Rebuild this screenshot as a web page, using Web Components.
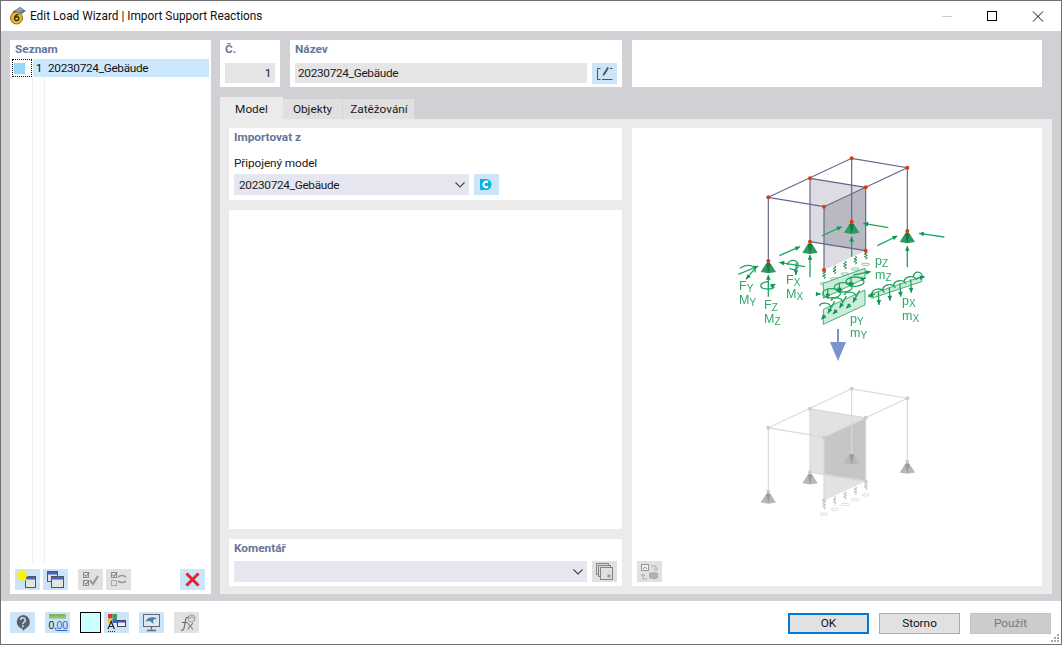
<!DOCTYPE html>
<html lang="cs"><head><meta charset="utf-8"><title>Edit Load Wizard</title>
<style>html,body{margin:0;padding:0;background:#fff}</style></head><body>
<load-wizard></load-wizard>
<script>
const FONT='Roboto,"Noto Sans",sans-serif';
const WIN=(x,y,w,h)=>`<rect x="${x+.5}" y="${y+.5}" width="${w}" height="${h}" fill="#e4e4e4" stroke="#555"/><rect x="${x+1}" y="${y+1}" width="${w-1}" height="2.5" fill="#3f62c8"/>`;
const ICONS={
 star:`<path d="M7.500 0l1.300 3.600L12.500 1.700 10.800 5.400 14.500 6.500 10.800 8.300 12 12 8.300 10.200 6.500 13.500 5.200 9.800 1.500 11 3.200 7.500 0 6 3.800 4.800 2.500 1.500 6 3.200z" fill="#fff200"/>`,
 new:()=>WIN(10,7,10,11)+ICONS.star,
 copy:()=>WIN(4,2,10,10)+WIN(8,7,12,11),
 checkall:()=>`<g fill="none" stroke="#8c8c8c"><rect x="5.500" y="3.500" width="5" height="5"/><rect x="5.500" y="11.500" width="5" height="5"/></g><path d="M6.500 5.500l1.500 2 3-4M6.500 13.500l1.500 2 3-4" fill="none" stroke="#777"/><path d="M12 11.500l3 3.500 5-8" fill="none" stroke="#999" stroke-width="2.200"/>`,
 checktoggle:()=>`<g fill="none" stroke="#8c8c8c"><rect x="5.500" y="3.500" width="5" height="5"/><rect x="5.500" y="11.500" width="5" height="5" stroke="#aaa"/></g><path d="M6.500 5.500l1.500 2 3-4" fill="none" stroke="#777"/><path d="M12 8q4-3 8 0M20 12q-4 3-8 0" fill="none" stroke="#999" stroke-width="1.600"/>`,
 del:()=>`<path d="M7.500 5.500l10 10M17.500 5.500l-10 10" stroke="#ea2127" stroke-width="3" stroke-linecap="square"/>`,
 help:()=>`<path d="M13 3a7 7 0 0 1 3 13.200L12.500 19l.3-2.100A7 7 0 0 1 13 3z" fill="#5b5f66"/><path d="M10.500 8a2.400 2.400 0 1 1 3.600 2.200c-1 .6-1.200 1-1.200 2" fill="none" stroke="#cfe4f7" stroke-width="1.500"/><rect x="12" y="13.400" width="1.700" height="1.700" fill="#cfe4f7"/>`,
 num:()=>`<rect x="4" y="2" width="17" height="4.500" fill="#8fc06a"/><path d="M6 2v2M9 2v2M12 2v2M15 2v2M18 2v2" stroke="#5c8f40" stroke-width=".7"/><text x="3.500" y="17" font-family="Liberation Sans,sans-serif" font-size="10.500" fill="#222">0,</text><text x="11.400" y="17" font-family="Liberation Sans,sans-serif" font-size="10.500" fill="#2c66d0">00</text><path d="M11.500 18.500h11" stroke="#2c66d0"/>`,
 color:()=>`<rect x="4" y="2" width="4.500" height="4.500" fill="#d33"/><rect x="8.500" y="2" width="4.500" height="4.500" fill="#3a3"/><rect x="4" y="6.500" width="4.500" height="4.500" fill="#e8c820"/><rect x="8.500" y="6.500" width="4.500" height="4.500" fill="#36c"/><path d="M4 17l3.200-7.500L10.400 17M5 14.500h4.600" fill="none" stroke="#222" stroke-width="1.200"/><path d="M4 19.500h8" stroke="#333" stroke-dasharray="1 1"/><rect x="13.500" y="8.500" width="8" height="6" fill="#eef" stroke="#445"/><rect x="14" y="9" width="7" height="1.600" fill="#3f62c8"/>`,
 view:()=>`<rect x="4.500" y="2.500" width="16" height="12" fill="#dfe7ee" stroke="#667"/><path d="M6.500 9.500c2-4.500 7-5.500 12-3-2.500 0-4 1-4.500 2.200l.5 3.300-3-2.500c-2-1-3-.5-5 0z" fill="#4f7f9f"/><path d="M12.500 14.500v3M8 18.500h9" stroke="#667" stroke-width="1.400"/>`,
 fx:()=>`<path d="M7 18c2.500 1 3-1 3.500-4l1-6c.5-2.500 1.500-3 3-2.500M8 10.500h5.500" fill="none" stroke="#666" stroke-width="1.100"/><path d="M13.500 11l5.500 6.500M19 11l-5.500 6.500" stroke="#777" stroke-width="1.100"/><circle cx="17.500" cy="6.500" r="3.500" fill="none" stroke="#999"/><path d="M14 6.500q3.500-3.500 7 0" fill="#bbb" stroke="#999" stroke-width=".6"/>`,
 edit:()=>`<path d="M8.500 5.500h-3v11h3M10 16.500h10.500" fill="none" stroke="#555"/><path d="M10.500 13.500l.8-3 4-6.500 1.700 1-4 6.500z" fill="#555"/><path d="M18 5.500h2.500" stroke="#555"/>`,
 conn:()=>`<path d="M6 5h6a5.500 5.500 0 0 1 0 11H6z" fill="#0ab3e6"/><path d="M14 8.500a2.700 2.700 0 1 0 0 4" fill="none" stroke="#fff" stroke-width="2"/>`,
 library:()=>`<g fill="#d9d9d9" stroke="#868686"><rect x="4.500" y="2.500" width="12" height="11"/><rect x="6.500" y="4.500" width="12" height="11"/><rect x="8.500" y="6.500" width="12" height="12" fill="#e0e0e0"/></g><rect x="15.500" y="13.500" width="3" height="3" fill="#999"/>`,
 swap:()=>`<rect x="4.500" y="3.500" width="7" height="6" fill="#eee" stroke="#999"/><path d="M6 8l2-2 2 2" fill="none" stroke="#999"/><path d="M14 5h5v4M17 7.500l2 2 2-2" fill="none" stroke="#aaa"/><path d="M10 18H6v-4M4 15l2-2 2 2" fill="none" stroke="#aaa"/><path d="M12 12l5-1 4 1v5l-4 1.500-5-1.500z" fill="#b0b0b0"/>`
};
function comp(name,css,render){
 customElements.define(name,class extends HTMLElement{
  connectedCallback(){
   if(this.shadowRoot)return;
   const s=this.attachShadow({mode:'open'});
   s.innerHTML=`<style>${css}</style>`+render(this);
  }
 });
}
comp('icon-btn',`:host{display:inline-block;width:25px;height:21px;background:#cbe4f8;flex:none}:host([off]){background:#e1e1e1}svg{display:block}`,
 e=>`<svg width="25" height="21" viewBox="0 0 25 21" aria-hidden="true">${ICONS[e.getAttribute('icon')]()}</svg>`);
comp('text-field',`:host{display:block;height:20px;background:#e5e5e5;line-height:20px;padding:0 3px;box-sizing:border-box;color:#1a1a1a;white-space:nowrap;letter-spacing:-.3px}:host([right]){text-align:right;padding-right:4px}`,
 e=>e.getAttribute('value'));
comp('combo-box',`:host{display:flex;align-items:center;height:21px;background:#e6e6f0;padding:0 4px 0 5px;box-sizing:border-box;color:#1a1a1a;flex:none;letter-spacing:-.3px}span{flex:1;white-space:nowrap}svg{display:block}`,
 e=>`<span>${e.getAttribute('value')||''}</span><svg width="10" height="6" viewBox="0 0 10 6"><path d="M.5.5L5 5 9.500.5" fill="none" stroke="#444" stroke-width="1.100"/></svg>`);
comp('group-panel',`:host{display:block;background:#fff;box-sizing:border-box;padding:1px 5px 0;min-width:0}.t{font-weight:700;color:#66759a;line-height:16px;height:16px;white-space:nowrap}`,
 e=>(e.getAttribute('heading')?`<div class="t">${e.getAttribute('heading')}</div>`:'')+`<slot></slot>`);
comp('tab-item',`:host{display:block;box-sizing:border-box;height:20px;margin-top:2px;line-height:20px;background:#e0e0e0;color:#1a1a1a;white-space:nowrap;text-align:center;border-right:1px solid #d4d4d4}:host([active]){background:#ebebeb;height:22px;margin-top:0;line-height:24px;border:0}`,
 e=>e.getAttribute('label'));
comp('dialog-btn',`:host{display:block;box-sizing:border-box;width:81px;height:21px;background:#e1e1e1;border:1px solid #adadad;text-align:center;line-height:19px;color:#111}:host([primary]){border:2px solid #0078d7;line-height:17px}:host([off]){background:#ccc;border-color:#c4c4c4;color:#787878}`,
 e=>e.getAttribute('label'));
comp('title-bar',`:host{display:flex;align-items:center;height:30px;background:#fff;flex:none;font-size:11.850px;color:#111}svg{display:block}.n{margin-left:4px;flex:1;white-space:nowrap}.c{display:flex;align-items:center;margin-right:3px}`,
 ()=>`<svg style="margin-left:8px" width="17" height="18" viewBox="0 0 17 18"><path d="M3 5l8-5 6 4-8 5z" fill="#5c7087"/><path d="M6 3l6-2.500 3 2-6 4z" fill="#8ea3ba"/><circle cx="7.500" cy="11" r="6" fill="#e9bb25" stroke="#8a6a10"/><path d="M9.500 7.500C7 7.500 5.500 9.500 5.500 11.500a2.200 2.200 0 1 0 4.200-1c-.6-1-2.600-1-3.800.2" fill="none" stroke="#33302a" stroke-width="1.400"/></svg>
 <div class="n">Edit Load Wizard | Import Support Reactions</div>
 <div class="c"><svg width="46" height="30"><path d="M22 15.500h10" stroke="#ccc"/></svg><svg width="46" height="30"><rect x="21.500" y="10.500" width="9" height="9" fill="none" stroke="#000"/></svg><svg width="46" height="30"><path d="M21 10.500l10 10M31 10.500l-10 10" stroke="#111" fill="none"/></svg></div>`);
comp('item-list',`:host{display:flex;flex-direction:column;flex:1;min-height:0;margin:2px -3px 0 -3px}
 .row{display:flex;height:18px;align-items:center;line-height:18px;color:#111;flex:none}
 .sw{width:20px;height:18px;margin-right:1px;box-sizing:border-box;border:1px dotted #111;padding-left:1px;display:flex;align-items:center;flex:none}
 .sw i{display:block;width:11px;height:11px;background:#94d7f8}
 .sel{flex:1;background:#cce8ff;display:flex;white-space:nowrap;letter-spacing:-.3px}
 .no{width:9px;text-align:right;margin-right:6px;flex:none}
 .rest{flex:1;display:flex;margin-left:20px}
 .rest b{display:block;width:12px;box-sizing:border-box;border-left:1px solid #eee}`,
 ()=>`<div class="row"><div class="sw"><i></i></div><div class="sel"><span class="no">1</span><span>20230724_Gebäude</span></div></div><div class="rest"><b></b><b></b></div>`);
const G=(x1,y1,x2,y2)=>{
 const a=Math.atan2(y2-y1,x2-x1),l=16,w=.45;
 return `<path d="M${x1} ${y1}L${x2} ${y2}"/><path class="h" d="M${x2} ${y2}L${x2-l*Math.cos(a-w)} ${y2-l*Math.sin(a-w)}L${x2-l*Math.cos(a+w)} ${y2-l*Math.sin(a+w)}z"/>`;
};
function frame(c){
 const A=[205,172],B=[330,115],C=[455,55],D=[622,83],E=[497,142],F=[372,200];
 const A1=[205,363],B1=[330,305],C1=[455,245],D1=[622,273],E1=[497,332],F1=[372,390];
 const P=(...p)=>p.map(q=>q.join(',')).join(' ');
 const dot=q=>`<circle cx="${q[0]}" cy="${q[1]}" r="6" fill="${c.node}"/>`;
 const sup=q=>`<g transform="translate(${q[0]} ${q[1]})"><polygon points="-7,8 7,8 23,33 0,37 -23,33" fill="${c.sup}"/><polygon points="-7,8 7,8 0,37" fill="${c.sup2}"/><circle cy="10" r="6" fill="${c.sup2}"/></g>`;
 let springs='';
 for(let i=0;i<5;i++){const x=372+i*31.25,y=390-i*14.5;
  springs+=`<path d="M${x} ${y+2}l5 4-9 4 9 4-9 4 9 4-5 4" fill="none" stroke="${c.spring}" stroke-width="3"/><ellipse cx="${x}" cy="${y+41}" rx="12" ry="3.500" fill="#fff" stroke="${c.spring}" stroke-width="1.500"/>`;}
 return `<polygon points="${P(B,E,E1,B1)}" fill="${c.l}"/><polygon points="${P(F,E,E1,F1)}" fill="${c.l}"/><polygon points="372,200 497,142 497,332 372,314" fill="${c.d}"/>`+
 springs+
 `<g stroke="${c.line}" stroke-width="3.500" fill="none"><path d="M${A}L${C}L${D}L${F}L${A}M${B}L${E}"/><path d="M${A}L${A1}M${B}L${B1}M${C}L${C1}M${D}L${D1}M${F}L${F1}M${E}L${E1}M${B1}L${E1}"/></g>`+
 [A1,B1,C1,D1].map(sup).join('')+[A,B,C,D,E,F,A1,B1,C1,D1,E1,F1].map(dot).join('');
}
comp('load-diagram',`:host{display:block;width:410px;height:458px;flex:none}svg{display:block;filter:blur(.3px)}
 .g path,.g ellipse{fill:none;stroke:#22a562;stroke-width:4}.g .h{fill:#0f9455;stroke:none}
 text{font-family:"Liberation Sans",sans-serif;font-size:12.500px;fill:#2da868}tspan{font-size:10px}`,
 ()=>{
 let g='';
 [[365,288,425,260],[565,263,490,250],[532,317,592,288],[733,291,657,280],[238,347,300,320],[315,380,238,367],[115,403,175,378],[455,350,455,290],[622,382,622,318],[330,412,330,345],[205,470,205,405],[288,370,288,405],[165,385,138,418]].forEach(a=>g+=G(...a));
 const arc=d=>`<path d="${d}"/>`;
 g+=arc('M120 385c20-15 50-10 45 12')+arc('M262 375c5-20 35-18 32 5-2 10-16 12-26 4')+arc('M205 425c-30 3-30 22 0 22c8 0 16-2 18-7')+G(212,440,226,432);
 const panels=`<g stroke="#22a562" stroke-width="2.500"><polygon points="370,430 495,385 495,415 370,475" fill="#cdebd9"/><polygon points="370,508 495,450 495,495 370,553" fill="#cdebd9"/><polygon points="505,465 665,410 665,425 515,475" fill="#cdebd9"/></g>`;
 [[395,460],[430,442],[465,425]].forEach(([x,y])=>{g+=`<ellipse cx="${x}" cy="${y}" rx="27" ry="14"/>`+G(x-12,y-12,x-12,y+16)+G(x+22,y-8,x+32,y-11)});
 g+=G(460,405,512,395);
 [[390,498],[425,482],[465,465]].forEach(([x,y])=>{g+=`<path d="M${x-32} ${y}c5-12 30-12 36 4"/>`+G(x+14,y-14,x-6,y+22)+G(x-14,y+28,x-26,y+40)});
 g+=G(350,462,362,462);
 [[535,455],[568,442],[600,430],[632,418]].forEach(([x,y])=>{g+=`<path d="M${x-20} ${y+8}c2-18 30-22 38-6"/>`+G(x,y,x+2,y+40)});
 g+=`<path d="M640 412c0-22 28-20 28 2"/>`+G(525,462,505,470)+G(650,415,674,410);
 const col={l:'#dcdce2',d:'#b9b9c3',line:'#66668a',node:'#d63c0c',sup:'#2d9a5f',sup2:'#14784a',spring:'#1d8a52'};
 const gh={l:'#e2e2e2',d:'#c6c6c6',line:'#d9d9d9',node:'#cdcdcd',sup:'#b8b8b8',sup2:'#9d9d9d',spring:'#bdbdbd'};
 const t=(x,y,a,b)=>`<text x="${x}" y="${y}">${a}<tspan dy="1.500">${b}</tspan></text>`;
 return `<svg width="410" height="458" viewBox="632 128 410 458" role="img">
 <g transform="translate(700 370.500) scale(.33333)">${frame(gh)}</g>
 <g transform="translate(700 140) scale(.33333)">${frame(col)}${panels}<g class="g">${g}</g></g>
 ${t(739,290,'F','Y')}${t(739,304,'M','Y')}${t(764,309,'F','Z')}${t(764,323,'M','Z')}${t(786,284,'F','X')}${t(786,298,'M','X')}
 ${t(875,265,'p','Z')}${t(875,279,'m','Z')}${t(850,323,'p','Y')}${t(850,337,'m','Y')}${t(902,305,'p','X')}${t(902,320,'m','X')}
 <path d="M838 329v15" stroke="#7b93cc" stroke-width="2"/><path d="M830 342h16l-8 19z" fill="#7b93cc"/>
 </svg>`;});
comp('load-wizard',`:host{display:flex;flex-direction:column;width:1062px;height:645px;box-sizing:border-box;border:1px solid #707070;background:#fff;font:11.800px/16px ${FONT};overflow:hidden}
 .main{flex:1;min-height:0;background:#d0d0d5;display:flex;gap:9px;padding:9px 9px 7px}
 .left{width:201px;flex:none;flex-direction:column;padding-bottom:4px}
 .tools{display:flex;align-items:center;flex:none;margin:6px 0 0}
 .right{flex:1;min-width:0;display:flex;flex-direction:column;gap:10px}
 .top{display:flex;gap:10px;height:47px;flex:none;padding-right:10px}
 .pb{padding-top:6px}
 .n{display:flex;gap:5px}.n text-field{flex:1}
 .w{display:flex;flex-direction:column;flex:1;min-height:0}
 .tabs{display:flex;flex:none;height:22px}
 .body{flex:1;min-height:0;background:#ebebeb;padding:9px 10px 8px 9px;display:flex;gap:10px}
 .col{width:393px;flex:none;display:flex;flex-direction:column;gap:10px}
 .imp{height:72px;flex:none}
 .lab{margin-top:9px;height:20px;line-height:19px;color:#1a1a1a;letter-spacing:-.1px}
 .r{display:flex;gap:5px}
 .img{flex:1;background:#fff;display:flex;flex-direction:column;min-width:0}
 .over{padding:0 0 4px 5px;height:25px;box-sizing:border-box;margin-top:-25px}
 .foot{height:43px;flex:none;display:flex;align-items:flex-start;padding:11px 0 0 9px;box-sizing:border-box;position:relative}
 .sw{width:21px;height:21px;box-sizing:border-box;border:1px solid #000;background:#ccffff;flex:none}
 .btns{margin-left:auto;display:flex;gap:10px;padding:1px 10px 0 0}
 .grip{position:absolute;right:1px;bottom:1px}`,
 ()=>`<title-bar></title-bar>
 <div class="main">
  <group-panel class="left" heading="Seznam" style="display:flex">
   <item-list></item-list>
   <div class="tools">
    <icon-btn icon="new"></icon-btn><icon-btn icon="copy" style="margin-left:3px"></icon-btn>
    <icon-btn icon="checkall" off style="margin-left:10px"></icon-btn><icon-btn icon="checktoggle" off style="margin-left:3px"></icon-btn>
    <icon-btn icon="del" style="margin-left:49px"></icon-btn>
   </div>
  </group-panel>
  <div class="right">
   <div class="top">
    <group-panel heading="Č." style="width:60px"><div class="pb"><text-field right value="1"></text-field></div></group-panel>
    <group-panel heading="Název" style="width:332px"><div class="pb n"><text-field value="20230724_Gebäude"></text-field><icon-btn icon="edit"></icon-btn></div></group-panel>
    <group-panel style="flex:1"></group-panel>
   </div>
   <div class="w">
    <div class="tabs"><tab-item active label="Model" style="width:63px"></tab-item><tab-item label="Objekty" style="width:60px"></tab-item><tab-item label="Zatěžování" style="width:72px;padding-left:1px"></tab-item></div>
    <div class="body">
     <div class="col">
      <group-panel class="imp" heading="Importovat z"><div class="lab">Připojený model</div><div class="r"><combo-box value="20230724_Gebäude" style="width:235px"></combo-box><icon-btn icon="conn"></icon-btn></div></group-panel>
      <group-panel style="flex:1"></group-panel>
      <group-panel heading="Komentář" style="height:47px;flex:none"><div class="r" style="margin-top:5px"><combo-box style="flex:1"></combo-box><icon-btn icon="library" off></icon-btn></div></group-panel>
     </div>
     <div class="img"><load-diagram></load-diagram><div class="over"><icon-btn icon="swap" off></icon-btn></div></div>
    </div>
   </div>
  </div>
 </div>
 <div class="foot">
  <icon-btn icon="help"></icon-btn><icon-btn icon="num" style="margin-left:10px"></icon-btn>
  <div class="sw" style="margin-left:10px"></div><icon-btn icon="color" style="margin-left:3px"></icon-btn>
  <icon-btn icon="view" style="margin-left:10px"></icon-btn><icon-btn icon="fx" off style="margin-left:10px"></icon-btn>
  <div class="btns"><dialog-btn primary label="OK"></dialog-btn><dialog-btn label="Storno"></dialog-btn><dialog-btn off label="Použít"></dialog-btn></div>
  <svg class="grip" width="10" height="10"><g fill="#a8a8a8"><rect x="7" y="1" width="2" height="2"/><rect x="4" y="4" width="2" height="2"/><rect x="7" y="4" width="2" height="2"/><rect x="1" y="7" width="2" height="2"/><rect x="4" y="7" width="2" height="2"/><rect x="7" y="7" width="2" height="2"/></g></svg>
 </div>`);
</script>
</body></html>
